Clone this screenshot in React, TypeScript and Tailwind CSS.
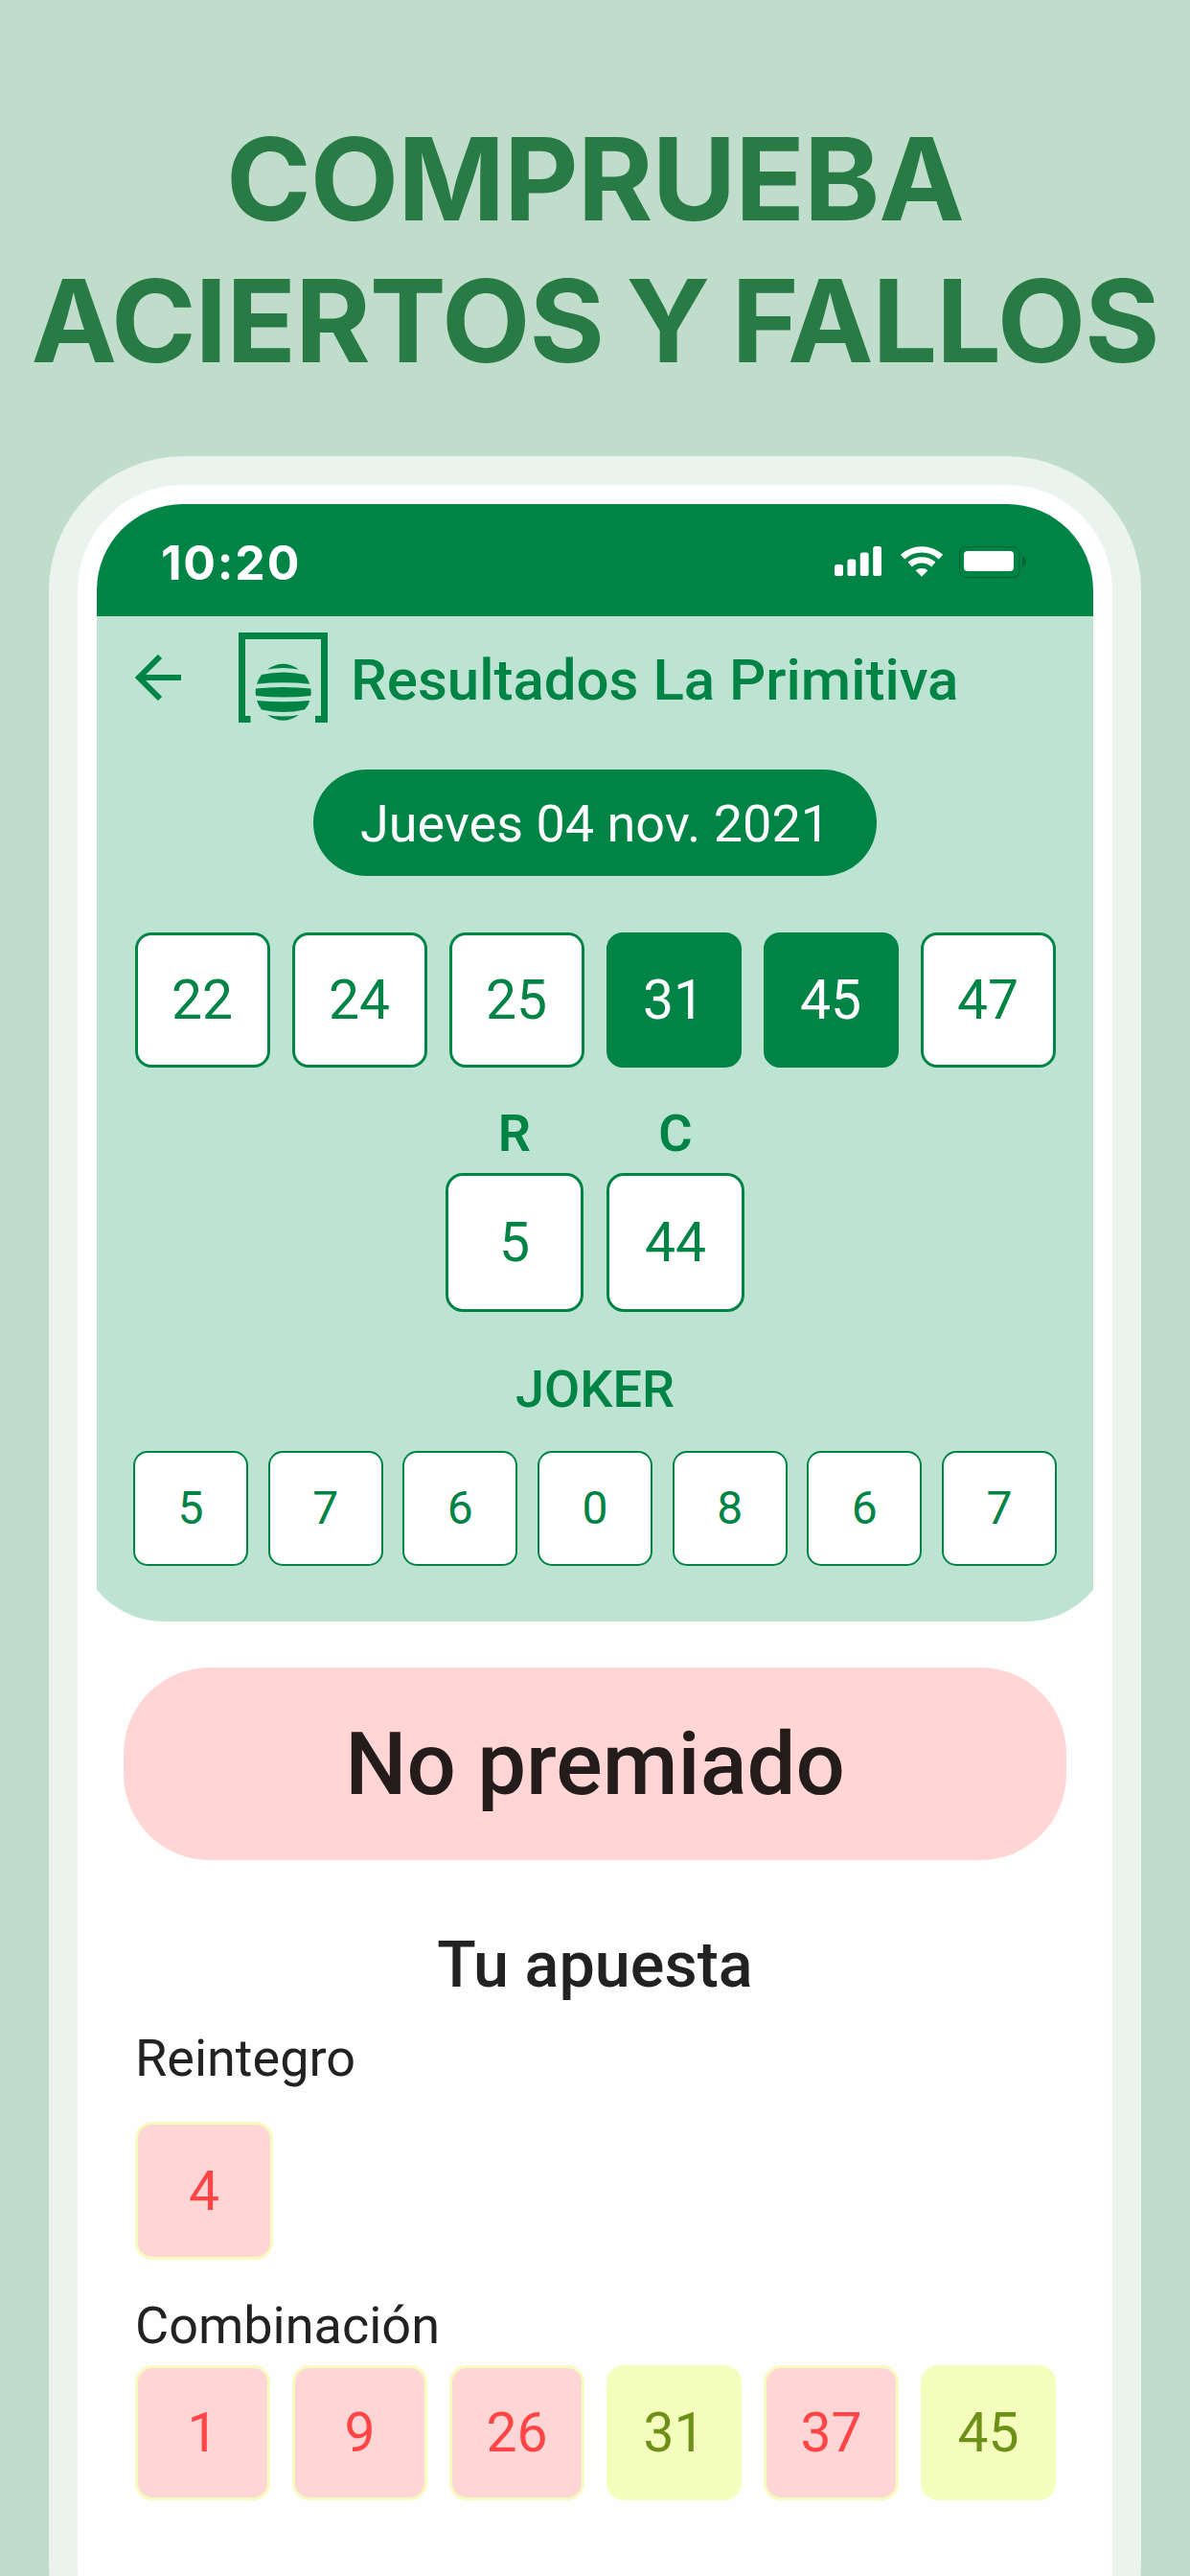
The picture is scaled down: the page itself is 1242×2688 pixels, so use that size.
const drawn = [
  { n: "22", hit: false },
  { n: "24", hit: false },
  { n: "25", hit: false },
  { n: "31", hit: true },
  { n: "45", hit: true },
  { n: "47", hit: false },
];

const joker = ["5", "7", "6", "0", "8", "6", "7"];

const bet = [
  { n: "1", hit: false },
  { n: "9", hit: false },
  { n: "26", hit: false },
  { n: "31", hit: true },
  { n: "37", hit: false },
  { n: "45", hit: true },
];

function StatusIcons() {
  return (
    <svg width="201" height="34" viewBox="0 0 201 34" fill="none">
      <g fill="#fff">
        <rect x="0" y="19" width="9" height="12" rx="2.6" />
        <rect x="13.4" y="13.4" width="8.8" height="17.6" rx="2.6" />
        <rect x="26.8" y="6.6" width="8.8" height="24.4" rx="2.6" />
        <rect x="40.2" y="0" width="8.8" height="31" rx="2.6" />
      </g>
      <g stroke="#fff" strokeWidth="6.4">
        <path d="M71 11.2a29.5 29.5 0 0 1 40 0" />
        <path d="M78.7 19a18.6 18.6 0 0 1 24.6 0" />
      </g>
      <path d="M84.6 25.2a10 10 0 0 1 12.8 0L91 31.8z" fill="#fff" />
      <rect x="130.5" y="0.5" width="62.5" height="32" rx="7" stroke="#006232" />
      <rect x="135" y="5" width="52" height="21" rx="4" fill="#fff" />
      <path d="M196 10.3c5.3 2.4 5.3 9 0 11.4z" fill="#006232" />
    </svg>
  );
}

function BackArrow() {
  return (
    <svg width="48" height="48" viewBox="0 0 48 48" fill="none" stroke="#008446" strokeWidth="6">
      <path d="M48 24H6" />
      <path d="M26 2 4 24l22 22" />
    </svg>
  );
}

function PrimitivaLogo() {
  return (
    <svg width="93" height="94" viewBox="0 0 93 94" fill="#008446">
      <path d="M0 0H93V94H80V87H86V7H7V87H12.5V94H0Z" />
      <path d="M30 38.5Q46.5 27 63 38.5Q46.5 35.5 30 38.5Z" />
      <path d="M24 44Q46.5 39 69 44Q73 49 74.3 53.7Q46.5 51 19 53.7Q20.5 48.5 24 44Z" />
      <path d="M18 58.5Q46.5 55.5 75.3 58.5Q76.3 62 75.3 66Q46.5 69 18 66Q17.3 62 18 58.5Z" />
      <path d="M19 71Q46.5 73.5 74.3 71Q73 76 69 80.5Q46.5 85.5 24 80.5Q20.5 76 19 71Z" />
      <path d="M30 86Q46.5 89 63 86Q46.5 97.5 30 86Z" />
    </svg>
  );
}

function Ball({ n, className }: { n: string; className: string }) {
  return (
    <div className={`flex shrink-0 items-center justify-center leading-none ${className}`}>
      {n}
    </div>
  );
}

const outlined = "border-[#008446] bg-white text-[#008446]";
const missed = "border-[#f6fbc0] bg-[#ffd5d5] text-[#ff4545]";

export default function App() {
  return (
    <div className="flex h-[2688px] w-[1242px] flex-col items-center overflow-hidden bg-[#c0ddcb] font-['Roboto',sans-serif]">
      <h1 className="mt-[113px] h-[363px] shrink-0 text-center font-['Inter',sans-serif] text-[120px] leading-[148px] font-bold tracking-[-1.05px] [word-spacing:-4px] whitespace-nowrap text-[#287b44]">
        COMPRUEBA
        <br />
        ACIERTOS Y FALLOS
      </h1>

      <div className="h-[2340px] w-[1140px] shrink-0 rounded-[140px] bg-[#eaf3ee] p-[30px]">
        <div className="h-full rounded-[110px] bg-white p-[20px]">
          <div className="flex h-full flex-col items-center overflow-hidden rounded-[90px] bg-[#fefefe]">
            <div className="flex h-[117px] w-full shrink-0 items-center justify-between bg-[#008446] pt-[5px] pr-[69px] pl-[67px]">
              <span className="font-['Inter',sans-serif] text-[50px] leading-none font-bold tracking-[1.8px] text-white">
                10:20
              </span>
              <StatusIcons />
            </div>

            <div className="flex h-[1049px] w-[1080px] shrink-0 flex-col items-center rounded-b-[90px] bg-[#bde3d2] text-[#008446]">
              <div className="flex h-[128px] w-full items-center pl-[60px]">
                <BackArrow />
                <div className="ml-[60px]">
                  <PrimitivaLogo />
                </div>
                <h2 className="ml-[24px] pt-[5px] text-[60px] leading-none font-medium whitespace-nowrap">
                  Resultados La Primitiva
                </h2>
              </div>

              <div className="mt-[32px] flex h-[111px] w-[588px] items-center justify-center rounded-full bg-[#008446] pt-[2px] text-[54px] leading-none whitespace-nowrap text-white">
                Jueves 04 nov. 2021
              </div>

              <div className="mt-[59px] flex gap-[23px]">
                {drawn.map((b) => (
                  <Ball
                    key={b.n}
                    n={b.n}
                    className={`size-[141px] rounded-[17px] border-3 text-[57px] ${
                      b.hit ? "border-[#008446] bg-[#008446] text-white" : outlined
                    }`}
                  />
                ))}
              </div>

              <div className="mt-[37px] flex gap-[24px]">
                {[
                  ["R", "5"],
                  ["C", "44"],
                ].map(([label, n]) => (
                  <div key={label} className="flex flex-col items-center">
                    <div className="h-[73px] text-[54px] leading-[64px] font-semibold">{label}</div>
                    <Ball n={n} className={`h-[145px] w-[144px] rounded-[18px] border-3 text-[57px] ${outlined}`} />
                  </div>
                ))}
              </div>

              <div className="mt-[49px] text-[54px] leading-[64px] font-medium">JOKER</div>
              <div className="mt-[32px] flex w-[964px] justify-between">
                {joker.map((n, i) => (
                  <Ball key={i} n={n} className={`size-[120px] rounded-[15px] border-2 text-[48px] ${outlined}`} />
                ))}
              </div>
            </div>

            <div className="mt-[48px] flex h-[201px] w-[984px] shrink-0 items-center justify-center rounded-[90px] bg-[#ffd5d5] pt-[2px] text-[90.5px] leading-none font-medium text-[#231c1b]">
              No premiado
            </div>

            <h3 className="mt-[69px] text-[66.5px] leading-[80px] font-medium text-[#222]">Tu apuesta</h3>

            <div className="flex w-[960px] flex-col text-[54px] leading-[64px] text-[#222]">
              <div className="mt-[26px]">Reintegro</div>
              <Ball n="4" className={`mt-[34px] size-[144px] rounded-[18px] border-3 text-[57px] ${missed}`} />
              <div className="mt-[37px]">Combinación</div>
              <div className="mt-[9px] flex gap-[23px]">
                {bet.map((b) => (
                  <Ball
                    key={b.n}
                    n={b.n}
                    className={`size-[141px] rounded-[18px] border-3 text-[57px] ${
                      b.hit ? "border-[#f4ffbd] bg-[#f4ffbd] text-[#6f9018]" : missed
                    }`}
                  />
                ))}
              </div>
            </div>
          </div>
        </div>
      </div>
    </div>
  );
}
